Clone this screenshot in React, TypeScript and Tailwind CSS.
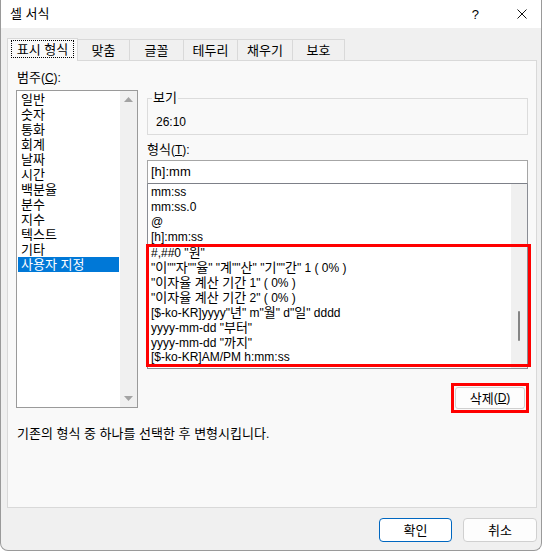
import React from 'react';

const FONT = "font-['Liberation_Sans','Noto_Sans_CJK_KR',sans-serif]";

const categories = ['일반', '숫자', '통화', '회계', '날짜', '시간', '백분율', '분수', '지수', '텍스트', '기타', '사용자 지정'];

const formats = [
  'mm:ss',
  'mm:ss.0',
  '@',
  '[h]:mm:ss',
  '#,##0 "원"',
  '"이""자""율" "계""산" "기""간" 1 ( 0% )',
  '"이자율 계산 기간 1" ( 0% )',
  '"이자율 계산 기간 2" ( 0% )',
  '[$-ko-KR]yyyy"년" m"월" d"일" dddd',
  'yyyy-mm-dd "부터"',
  'yyyy-mm-dd "까지"',
  '[$-ko-KR]AM/PM h:mm:ss',
];

const tabs = [
  { label: '맞춤', w: 'w-[52px]' },
  { label: '글꼴', w: 'w-[54px]' },
  { label: '테두리', w: 'w-[54px]' },
  { label: '채우기', w: 'w-[55px]' },
  { label: '보호', w: 'w-[52px]' },
];

// hangul runs get a slightly bigger size so their advance matches the original
function T({ text }: { text: string }) {
  const parts = text.split(/([\uAC00-\uD7A3]+(?: [\uAC00-\uD7A3]+)*)/);
  return (
    <>
      {parts.map((p, i) =>
        i % 2 === 1 ? (
          <span key={i} className="text-[13px]">
            {p}
          </span>
        ) : (
          p
        )
      )}
    </>
  );
}

function Arrow({ down }: { down?: boolean }) {
  return (
    <svg width="9" height="5" viewBox="0 0 9 5">
      <path d={down ? 'M0 0h9L4.5 5z' : 'M0 5h9L4.5 0z'} fill="#a3a3a3" />
    </svg>
  );
}

export default function App() {
  return (
    <div className={`w-[544px] h-[552px] bg-white text-[12px] text-black ${FONT}`}>
      <div className="w-[542px] h-[551px] flex flex-col border-x border-b border-[#9a9a9a] rounded-b-[8px] overflow-hidden bg-[#f0f0f0]">
        {/* title bar */}
        <div className="h-[28px] shrink-0 bg-white flex items-center pl-[9px]">
          <span className="leading-[15px]">
            <T text="셀 서식" />
          </span>
          <span className="ml-auto text-[13px] leading-[15px]">?</span>
          <svg className="ml-[38px] mr-[14px]" width="10" height="10" viewBox="0 0 10 10">
            <path d="M0.5 0.5L9.5 9.5M9.5 0.5L0.5 9.5" stroke="#111" strokeWidth="1" />
          </svg>
        </div>

        {/* tabs */}
        <div className="mt-[10px] ml-[6px] h-[22px] flex items-end">
          <div className="relative z-10 w-[71px] h-[23px] -mb-px border-x border-t border-[#d9d9d9] bg-[#f9f9f9] px-[3px] pt-[1px]">
            <div className="h-[18px] border border-dotted border-black flex items-center justify-center leading-[15px]">
              <T text="표시 형식" />
            </div>
          </div>
          {tabs.map((t) => (
            <div
              key={t.label}
              className={`${t.w} h-[21px] border-t border-r border-[#d9d9d9] bg-[#f0f0f0] flex items-center justify-center leading-[15px]`}
            >
              <T text={t.label} />
            </div>
          ))}
        </div>

        {/* panel */}
        <div className="ml-[6px] mr-[4px] h-[448px] shrink-0 border border-[#d9d9d9] bg-[#f9f9f9] px-[8px] pt-[9px]">
          <div className="flex">
            {/* category column */}
            <div className="w-[122px]">
              <div className="pl-[1px] h-[15px] leading-[15px]">
                <T text="범주" />(<span className="underline">C</span>):
              </div>
              <div className="mt-[5px] h-[318px] border border-[#9a9a9a] bg-white flex">
                <div className="flex-1 pt-[1px]">
                  {categories.map((c, i) => (
                    <div
                      key={c}
                      className={
                        i === categories.length - 1
                          ? 'mx-[1px] h-[15px] leading-[15px] pl-[3px] bg-[#0078d7] text-white'
                          : 'mx-[1px] h-[15px] leading-[15px] pl-[3px]'
                      }
                    >
                      <T text={c} />
                    </div>
                  ))}
                </div>
                <div className="w-[17px] bg-[#f0f0f0] flex flex-col items-center justify-between pt-[6px] pb-[6px]">
                  <Arrow />
                  <Arrow down />
                </div>
              </div>
            </div>

            {/* format column */}
            <div className="ml-[9px] w-[381px]">
              <fieldset className="mt-[20px] border border-[#dcdcdc]">
                <legend className="ml-[4px] px-[1px] leading-[15px]">
                  <T text="보기" />
                </legend>
                <div className="pl-[8px] pt-[9px] pb-[4px] leading-[15px]">26:10</div>
              </fieldset>
              <div className="mt-[7px] h-[15px] leading-[15px]">
                <T text="형식" />(<span className="underline">T</span>):
              </div>
              <div className="mt-[3px] h-[24px] border border-[#a6a6a6] border-b-[#7d8088] bg-white pl-[3px] flex items-center text-[13px]">
                [h]:mm
              </div>
              <div className="relative h-[185px] border-x border-b border-[#8a8d94] bg-white flex">
                <div className="flex-1 pt-[1px] pl-[3px]">
                  {formats.map((f) => (
                    <div key={f} className="h-[15px] leading-[15px] whitespace-pre">
                      <T text={f} />
                    </div>
                  ))}
                </div>
                <div className="w-[16px] bg-[#f0f0f0] flex flex-col items-center">
                  <div className="mt-[127px] w-[2px] h-[30px] rounded-full bg-[#858585]" />
                </div>
                <div className="absolute left-[-2px] top-[60px] w-[385px] h-[123px] border-[3px] border-[#ff0000]" />
              </div>
              <div className="mt-[14px] flex justify-end -mr-px">
                <div className="w-[78px] h-[30px] border-[3px] border-[#ff0000] p-[1px]">
                  <div className="h-full border border-[#d0d0d0] rounded-[3px] bg-[#fdfdfd] flex items-center justify-center leading-[15px]">
                    <T text="삭제" />(<span className="underline">D</span>)
                  </div>
                </div>
              </div>
            </div>
          </div>
          <div className="mt-[13px] pl-[1px] h-[15px] leading-[15px]">
            <T text="기존의 형식 중 하나를 선택한 후 변형시킵니다." />
          </div>
        </div>

        {/* footer */}
        <div className="mt-[10px] mr-[4px] flex justify-end gap-[11px]">
          <div className="w-[73px] h-[24px] border border-[#0067c0] rounded-[4px] bg-white flex items-center justify-center leading-[15px]">
            <T text="확인" />
          </div>
          <div className="w-[74px] h-[24px] border border-[#d0d0d0] rounded-[4px] bg-[#fdfdfd] flex items-center justify-center leading-[15px]">
            <T text="취소" />
          </div>
        </div>
      </div>
    </div>
  );
}
